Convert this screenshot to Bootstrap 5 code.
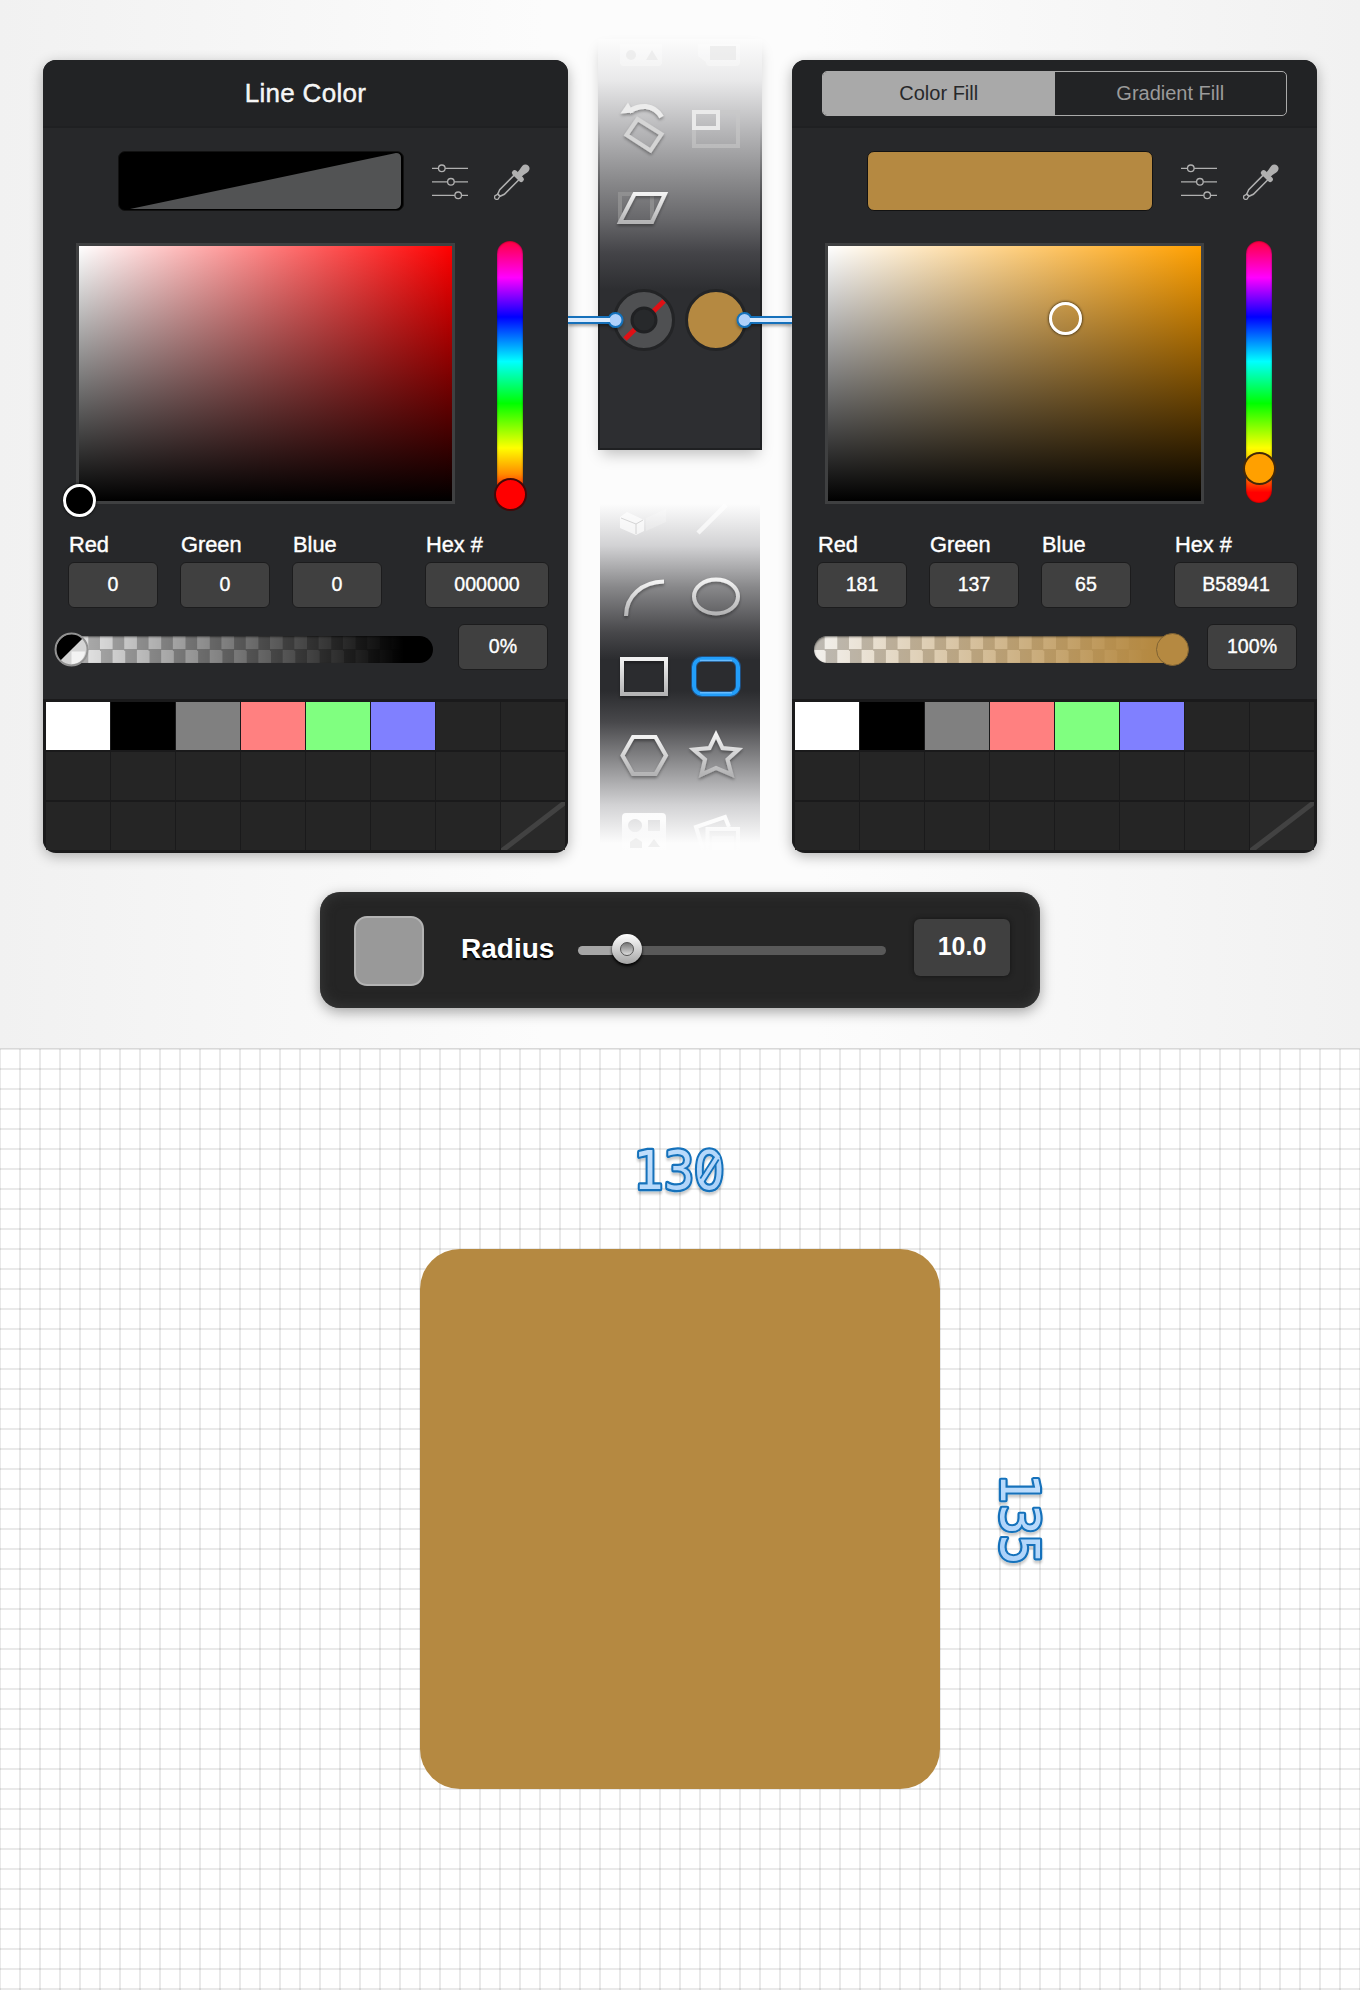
<!DOCTYPE html>
<html lang="en">
<head>
<meta charset="utf-8">
<meta name="viewport" content="width=device-width, initial-scale=1">
<title>Line and fill colors</title>
<link href="https://cdn.jsdelivr.net/npm/bootstrap@5.3.0/dist/css/bootstrap.min.css" rel="stylesheet">
<style>
body{font-family:"Liberation Sans",Arial,sans-serif;width:1360px;background:#fff;overflow-x:hidden}
.stage{height:1048px;padding:0 43px;background:linear-gradient(90deg,#f1f1f1,#fcfcfc 40%,#fcfcfc 60%,#f1f1f1)}
.panels{height:892px}
.panel{width:525px;height:792px;margin-top:60px;border-radius:13px;background:#27282a;box-shadow:0 4px 14px rgba(0,0,0,.3);color:#fff}
.panel-top{height:68px;background:#222325;border-radius:13px 13px 0 0;border-bottom:2px solid #1f2022}
.panel-title{font-size:26px;letter-spacing:.3px;line-height:67px;-webkit-text-stroke:.4px #fff;color:#f4f4f4}
.segments{width:465px;height:45px;border:1.5px solid #aaa;border-radius:5px;overflow:hidden;margin:11px 0 0 30px;font-size:20px}
.segments>div{line-height:43px;width:232px;text-align:center;color:#9b9b9b}
.segments>.on{background:#a9a9a9;color:#27282a}
.preview-row{padding:23px 0 0 75px}
.chip{width:286px;height:60px;border:1.5px solid #121212;border-radius:7px;background:#b58941}
.chip.none{background:#000;overflow:hidden}
.chip svg{display:block}
.i-sliders{width:38px;height:38px;margin:11px 0 0 27px}
.i-dropper{width:36px;height:36px;margin:13px 0 0 25px}
.field-row{padding:32px 0 0 33px}
.field{width:379px;height:261px;border:3px solid #3f4041}
.f-red{background:linear-gradient(transparent,#000),linear-gradient(90deg,#fff,#f00)}
.f-amber{background:linear-gradient(transparent,#000),linear-gradient(90deg,#fff,#ffa000)}
.knob{position:absolute;border-radius:50%}
.picker{width:33px;height:33px;border:3px solid #fff;box-shadow:0 0 3px #000}
.hue{width:26px;height:262px;margin:-2px 0 0 42px;border-radius:13px;background:linear-gradient(#ff0040,#f0f 14%,#00f 29%,#0ff 46%,#0f0 62%,#ff0 79%,#ff8a00 89%,#f00 96%);box-shadow:inset 0 0 2px rgba(0,0,0,.6)}
.hue .knob{width:33px;height:33px;left:-3.5px;border:2px solid rgba(20,10,10,.8);background-clip:border-box}
.numbers{padding:26px 0 0 25px;height:103px}
.numbers>div{margin-right:23px}
.numbers>.wide-gap{margin-right:44px}
.numbers>:last-child{margin-right:0}
.numbers label{display:block;font-size:21.8px;line-height:30px;height:31.500px;padding-left:1px;white-space:nowrap;-webkit-text-stroke:.4px #fff}
.num{width:90px;height:46px;border:1.5px solid #1c1c1d;border-radius:6px;background:#404040;font-size:19.6px;line-height:43px;text-align:center;-webkit-text-stroke:.35px #fff;color:#fff;margin-right:-1px}
.num.hex{width:124px}
.opacity-row{height:92px;padding:17px 0 0 22px}
.opacity-row .num{margin-left:25px}
.alpha{width:368px;height:27px;margin-top:12px}
.alpha-track{height:27px;border-radius:13.5px;box-shadow:inset 0 1px 2px rgba(0,0,0,.55)}
.a-black{background:linear-gradient(90deg,transparent,#000 92%),conic-gradient(#f0f0f0 25%,#b4b4b4 0 50%,#f0f0f0 0 75%,#b4b4b4 0) -1px 0/24.3px 27px}
.a-gold{background:linear-gradient(90deg,rgba(181,137,65,.02),#b58941 92%),conic-gradient(#f4f3f1 25%,#bdbab5 0 50%,#f4f3f1 0 75%,#bdbab5 0) -1px 0/24.3px 27px}
.swatches{height:154px;background:#1a1a1b;border-radius:0 0 13px 13px;padding:3px;display:grid;grid-template-columns:repeat(8,1fr);grid-template-rows:repeat(3,1fr);gap:1.3px}
.swatches>div{background:#252525;overflow:hidden}
.swatches svg{display:block;width:100%;height:100%}
.middle{width:224px}
.tools{display:block}
.tools-a{width:164px;height:411px;margin:39px 0 0 30px;background:linear-gradient(rgba(252,252,252,0),#e9e9ea 10%,#b8b8ba 22%,#8b8b8d 34%,#67676a 44%,#444448 52%,#2d2e31 61%);box-shadow:0 8px 14px -4px rgba(0,0,0,.25)}
.tools-b{width:160px;height:346px;margin:54px 0 0 32px;background:linear-gradient(rgba(252,252,252,0),#d2d2d4 12%,#88888a 24%,#48484b 37%,#2b2c2f 45%,#2b2c2f 54%,#48484b 63%,#88888a 74%,#d2d2d4 87%,rgba(252,252,252,0) 98%)}
.link-line{position:absolute;top:307px;width:60px;height:28px}
.radius-bar{width:720px;height:116px;border-radius:20px;background:#252525;box-shadow:0 4px 14px rgba(0,0,0,.35),inset 0 0 14px #3a3b3b;padding:0 30px 0 34px}
.tile{width:70px;height:70px;border-radius:13px;background:#999;border:2px solid #b3b3b3;margin-top:2px}
.radius-name{font-size:28px;font-weight:700;color:#fff;text-shadow:0 2px 1px #000;width:117px;margin-left:37px;line-height:34px;margin-top:-3px}
.track{width:308px;height:9px;border-radius:5px;background:linear-gradient(90deg,#a6a6a6 48px,#595959 48px)}
.track .knob{left:34px;top:-12px;width:30px;height:30px;background:linear-gradient(#fff,#a5a5a5);box-shadow:0 2px 3px #000;display:grid;place-items:center}
.track .knob i{width:14px;height:14px;border-radius:50%;background:linear-gradient(#777,#ddd);border:1.5px solid #555}
.radius-value{width:96px;height:57px;border-radius:6px;background:#404040;color:#fff;font-size:25px;font-weight:700;line-height:54px;text-align:center;margin-left:28px;margin-top:-5px;box-shadow:0 0 5px #151515}
.paper{height:942px;background:linear-gradient(#d8d8d8,#d8d8d8) 0 0/100% 1px no-repeat,repeating-linear-gradient(90deg,rgba(0,0,0,.085) 0 1px,transparent 1px 19px,rgba(0,0,0,.085) 19px 20px),repeating-linear-gradient(rgba(0,0,0,.085) 0 2px,transparent 2px 20px),#fff}
.rounded-shape{width:520px;height:540px;border-radius:40px;background:#b58941;margin:200.500px 0 0 420px}
.dim{position:absolute;overflow:visible}
.dim text{font-family:"DejaVu Sans",sans-serif;font-size:53px;fill:url(#ink);stroke:#1271bb;stroke-width:4.4px;stroke-linejoin:round;paint-order:stroke}
</style>
</head>
<body>
<svg width="0" height="0" class="position-absolute">
  <defs>
    <linearGradient id="metal" x1="0" y1="0" x2="0" y2="1"><stop offset="0" stop-color="#f2f2f2"/><stop offset="1" stop-color="#b4b4b5"/></linearGradient>
    <linearGradient id="ink" x1="0" y1="0" x2="1" y2="1"><stop offset="0" stop-color="#c6e1fd"/><stop offset="1" stop-color="#a6cff8"/></linearGradient>
    <filter id="soft" x="-30%" y="-30%" width="160%" height="170%"><feDropShadow dx="0" dy="2" stdDeviation="1.5" flood-color="#000" flood-opacity=".35"/></filter>
    <filter id="dimshade" x="-10%" y="-10%" width="120%" height="130%"><feDropShadow dx="0" dy="3" stdDeviation="1" flood-color="#000" flood-opacity=".2"/></filter>
    <symbol id="sliders" viewBox="0 0 38 38"><g stroke="#b0b0b0" stroke-width="1.3" fill="#27282a"><path d="M1 6.3h36M1 19.8h36M1 33.3h36"/><circle cx="10.8" cy="6.3" r="3.3"/><circle cx="19.9" cy="19.8" r="3.3"/><circle cx="27.2" cy="33.3" r="3.3"/></g></symbol>
    <symbol id="dropper" viewBox="0 0 36 36"><g transform="translate(17.6 18.4) rotate(45)"><path d="M-3.3-7V13.5L-1.6 18H1.6L3.3 13.5V-7" fill="none" stroke="#b0b0b0" stroke-width="1.5"/><path d="M-1.4 18L-2.3 21.5Q0 25 2.3 21.5L1.4 18Z" fill="none" stroke="#b0b0b0" stroke-width="1.3"/><rect x="-7.3" y="-11.6" width="14.6" height="5.4" rx="2.6" fill="#b0b0b0"/><path d="M-4.2-19.5a4.2 4.2 0 0 1 8.4 0C4.2-17 3-15 3-11H-3C-3-15-4.2-17-4.2-19.5Z" fill="#b0b0b0"/></g></symbol>
  </defs>
</svg>

<section class="stage position-relative">
  <div class="panels d-flex align-items-start">
    <div class="panel flex-shrink-0">
      <div class="panel-top text-center"><div class="panel-title">Line Color</div></div>
      <div class="preview-row d-flex align-items-start">
        <div class="chip none"><svg width="283" height="57"><path d="M11 57L277 1Q282 1 282 6V51Q282 56 277 57Z" fill="#525354"/></svg></div>
        <svg class="i-sliders"><use href="#sliders"/></svg>
        <svg class="i-dropper"><use href="#dropper"/></svg>
      </div>
      <div class="field-row d-flex align-items-start">
        <div class="field f-red position-relative"><span class="knob picker" style="left:-16px;top:238px;background:#000"></span></div>
        <div class="hue position-relative"><span class="knob" style="top:237px;background:#f00"></span></div>
      </div>
      <div class="numbers d-flex">
        <div><label>Red</label><div class="num">0</div></div>
        <div><label>Green</label><div class="num">0</div></div>
        <div class="wide-gap"><label>Blue</label><div class="num">0</div></div>
        <div><label>Hex #</label><div class="num hex">000000</div></div>
      </div>
      <div class="opacity-row d-flex align-items-start">
        <div class="alpha position-relative"><div class="alpha-track a-black"></div>
          <svg class="knob" style="left:-11px;top:-4px" width="35" height="35"><circle cx="17.5" cy="17.5" r="16" fill="#d4d4d4"/><path d="M17.5 19.500H31A13 13 0 0 1 17.500 32Z" fill="#f3f3f3"/><path d="M6.2 28.8A16 16 0 0 1 28.8 6.2Z" fill="#000"/><circle cx="17.5" cy="17.5" r="16" fill="none" stroke="#929292" stroke-width="2"/></svg>
        </div>
        <div class="num">0%</div>
      </div>
      <div class="swatches">
        <div style="background:#fff"></div><div style="background:#000"></div><div style="background:#808080"></div><div style="background:#ff8080"></div><div style="background:#80ff80"></div><div style="background:#8080ff"></div><div></div><div></div>
        <div></div><div></div><div></div><div></div><div></div><div></div><div></div><div></div>
        <div></div><div></div><div></div><div></div><div></div><div></div><div></div>
        <div style="background:#292929"><svg viewBox="0 0 64 49" preserveAspectRatio="none"><path d="M0 50L66-1" stroke="#424242" stroke-width="5"/></svg></div>
      </div>
    </div>

    <div class="middle flex-shrink-0">
      <svg class="tools tools-a" viewBox="598 39 164 411">
        <defs><linearGradient id="edgeA" x1="0" y1="0" x2="0" y2="1"><stop offset=".2" stop-color="#1f2022" stop-opacity="0"/><stop offset=".6" stop-color="#1f2022"/></linearGradient></defs>
        <path fill="url(#edgeA)" d="M598 39h2v411h-2zM760 39h2v411h-2z"/>
        <path fill="#1f2022" d="M598 448h164v2H598z"/>
        <g fill="#fff" opacity=".35"><path d="M620 44h42v18q0 4-4 4h-34q-4 0-4-4z"/><path d="M698 44h42v18q0 4-4 4h-26q-4 0-4-4l-8-6z"/></g>
        <g fill="#e4e4e4" opacity=".5"><circle cx="631" cy="55" r="5"/><path d="M646 60l6-10 6 10zM710 46h26v14h-26z"/></g>
        <g filter="url(#soft)" fill="none">
          <path d="M629 111.500Q637 106 646 106.500Q656 107.500 661.500 117" stroke="#ececec" stroke-width="5"/>
          <path d="M620.500 113.500L628 102.500L633.500 112.500Z" fill="#ececec"/>
          <path d="M637.500 119L661.500 134L650.500 150.500L626.500 135Z" stroke="#d5d5d5" stroke-width="4"/>
        </g>
        <g fill="none">
          <rect x="694" y="112" width="44" height="34" stroke="#c8c8c8" stroke-opacity=".6" stroke-width="4"/>
          <rect x="694" y="112" width="24" height="16" stroke="#eaeaea" stroke-width="4"/>
          <rect x="620" y="194" width="32" height="28" stroke="#999" stroke-opacity=".65" stroke-width="4"/>
          <path filter="url(#soft)" d="M634.500 194H665L652 222H620Z" stroke="url(#metal)" stroke-width="4"/>
        </g>
        <circle cx="644" cy="320" r="29.500" fill="#4f5052" stroke="#232426" stroke-width="3"/>
        <path d="M625 339L664 301" stroke="#e01015" stroke-width="5"/>
        <circle cx="644" cy="320" r="12" fill="#27292b" stroke="#202123" stroke-width="3"/>
        <circle cx="716" cy="320" r="29.500" fill="#b58941" stroke="#232426" stroke-width="3"/>
      </svg>
      <svg class="tools tools-b" viewBox="600 504 160 346">
        <g opacity=".7"><path d="M620 517l7-5 17 8v11l-8 4-16-7z" fill="#fff"/><path d="M621 518l15 6 7-4M636 524v10" stroke="#ccc" fill="none"/><path d="M646 518l20-9v13l-20 9z" fill="#fff" opacity=".3"/><path d="M698 533L726 505" stroke="#fff" stroke-width="4.500"/></g>
        <g filter="url(#soft)" fill="none" stroke="url(#metal)" stroke-width="4">
          <path d="M626 616C626 596 642 582 664 581.500"/>
          <ellipse cx="716" cy="596.500" rx="22" ry="17"/>
          <rect x="622" y="659" width="44" height="35"/>
          <path d="M633 737H655.500L666 755.500L655.500 774H633L622.500 755.500Z"/>
          <path d="M716 734.500L722.500 748L738.500 749.500L727.500 759.500L731.500 774.500L716 768L701.500 774.500L705 759.500L693.500 749.500L709.500 748Z"/>
        </g>
        <rect x="694" y="659" width="44" height="35" rx="8" fill="none" stroke="#1672d0" stroke-width="6" opacity=".5"/>
        <rect x="694" y="659" width="44" height="35" rx="8" fill="none" stroke="#229efa" stroke-width="4"/>
        <path d="M700 660.500h32M700 692.800h32" stroke="#67bcff" stroke-width="1.500"/>
        <defs><linearGradient id="fadeout" x1="0" y1="0" x2="0" y2="1"><stop offset=".2" stop-color="#fff" stop-opacity=".9"/><stop offset="1" stop-color="#fff" stop-opacity=".2"/></linearGradient></defs>
        <path fill="url(#fadeout)" fill-rule="evenodd" d="M626 813h36q4 0 4 4v33h-44v-33q0-4 4-4zM635 819a7 6.500 0 1 0 .1 0zM648 820v11h12v-11z"/>
        <path d="M703 850L696 827L725 817L729 827M707.500 850V829H738V850" fill="none" stroke="url(#fadeout)" stroke-width="4"/>
        <path d="M712 836h22v14h-22z" fill="#fff" opacity=".3"/>
        <path d="M630 842l6-4 6 4v6h-12zM648 847l6-8 6 8z" fill="#e4e4e4" opacity=".5"/>
      </svg>
    </div>

    <div class="panel flex-shrink-0">
      <div class="panel-top d-flex align-items-start"><div class="segments d-flex"><div class="on">Color Fill</div><div>Gradient Fill</div></div></div>
      <div class="preview-row d-flex align-items-start">
        <div class="chip"></div>
        <svg class="i-sliders"><use href="#sliders"/></svg>
        <svg class="i-dropper"><use href="#dropper"/></svg>
      </div>
      <div class="field-row d-flex align-items-start">
        <div class="field f-amber position-relative"><span class="knob picker" style="left:221px;top:56px"></span></div>
        <div class="hue position-relative"><span class="knob" style="top:211px;background:#ffa000"></span></div>
      </div>
      <div class="numbers d-flex">
        <div><label>Red</label><div class="num">181</div></div>
        <div><label>Green</label><div class="num">137</div></div>
        <div class="wide-gap"><label>Blue</label><div class="num">65</div></div>
        <div><label>Hex #</label><div class="num hex">B58941</div></div>
      </div>
      <div class="opacity-row d-flex align-items-start">
        <div class="alpha position-relative"><div class="alpha-track a-gold"></div><span class="knob" style="left:342px;top:-3px;width:33px;height:33px;background:#b58941;border:1.5px solid #806333"></span></div>
        <div class="num">100%</div>
      </div>
      <div class="swatches">
        <div style="background:#fff"></div><div style="background:#000"></div><div style="background:#808080"></div><div style="background:#ff8080"></div><div style="background:#80ff80"></div><div style="background:#8080ff"></div><div></div><div></div>
        <div></div><div></div><div></div><div></div><div></div><div></div><div></div><div></div>
        <div></div><div></div><div></div><div></div><div></div><div></div><div></div>
        <div style="background:#292929"><svg viewBox="0 0 64 49" preserveAspectRatio="none"><path d="M0 50L66-1" stroke="#424242" stroke-width="5"/></svg></div>
      </div>
    </div>
  </div>

  <!-- connectors from the two color wells to their panels -->
  <svg class="link-line" style="left:568px"><g filter="url(#soft)"><path d="M0 13H47" stroke="#1271bb" stroke-width="8"/><circle cx="47.500" cy="13" r="7" fill="#afd0fa" stroke="#1271bb" stroke-width="2"/><path d="M0 13H42" stroke="#dcecff" stroke-width="4"/></g></svg>
  <svg class="link-line" style="left:732px"><g filter="url(#soft)"><path d="M13 13H60" stroke="#1271bb" stroke-width="8"/><circle cx="12.500" cy="13" r="7" fill="#afd0fa" stroke="#1271bb" stroke-width="2"/><path d="M18 13H60" stroke="#dcecff" stroke-width="4"/></g></svg>

  <div class="radius-bar d-flex align-items-center mx-auto">
    <div class="tile"></div>
    <div class="radius-name">Radius</div>
    <div class="track position-relative"><span class="knob"><i></i></span></div>
    <div class="radius-value">10.0</div>
  </div>
</section>

<section class="paper position-relative d-flex align-items-start">
  <div class="rounded-shape"></div>
  <svg class="dim" style="left:630px;top:90px" width="110" height="70">
    <g filter="url(#dimshade)">
      <text transform="translate(0 50.500) scale(.92 1)" x="4 36.500 69.300">130</text>
      <path d="M72.500 42L86.500 20" stroke="#1271bb" stroke-width="7"/><path d="M70.500 45L88.500 17" stroke="#b4d7fb" stroke-width="3.500"/>
    </g>
  </svg>
  <svg class="dim" style="left:985px;top:420px" width="70" height="110">
    <g filter="url(#dimshade)">
      <text transform="translate(15.500 0) rotate(90) scale(.92 1)" x="6.200 39 72">135</text>
    </g>
  </svg>
</section>
<script src="https://cdn.jsdelivr.net/npm/bootstrap@5.3.0/dist/js/bootstrap.bundle.min.js"></script>
</body>
</html>
